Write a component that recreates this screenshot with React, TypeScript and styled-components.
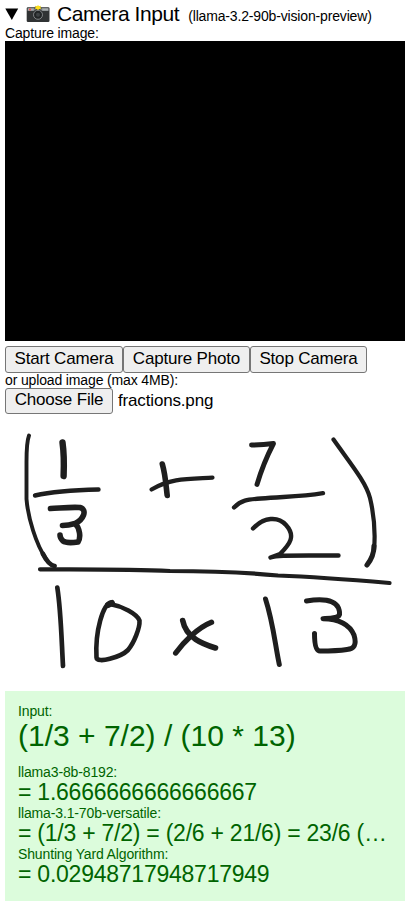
import React from 'react';
import styled, { createGlobalStyle } from 'styled-components';

const GlobalStyle = createGlobalStyle`
  * { box-sizing: border-box; }
  body {
    margin: 0;
    background: #fff;
    color: #000;
    font-family: "Liberation Sans", Arial, sans-serif;
  }
`;

const Page = styled.main`
  width: 400px;
  margin-left: 5px;
`;

const Summary = styled.header`
  display: flex;
  align-items: baseline;
  height: 26px;
  padding-top: 2px;
  white-space: nowrap;
`;

const Arrow = styled.svg`
  flex: none;
  align-self: flex-start;
  width: 14px;
  height: 12px;
  margin: 6px 7px 0 0;
`;

const CameraIcon = styled.svg`
  flex: none;
  align-self: flex-start;
  width: 24px;
  height: 18px;
  margin: 3px 7px 0 0;
`;

const Title = styled.h1`
  margin: 0;
  font-size: 21px;
  line-height: 24px;
  font-weight: 400;
  letter-spacing: -0.42px;
`;

const Model = styled.span`
  margin-left: 9px;
  font-size: 14px;
  letter-spacing: -0.16px;
`;

const Label = styled.div`
  font-size: 14px;
  line-height: 15px;
  height: 15px;
  letter-spacing: -0.14px;
  white-space: nowrap;
`;

const Video = styled.div`
  height: 300px;
  background: #000;
`;

const Row = styled.div<{ $top?: number }>`
  display: flex;
  align-items: center;
  margin-top: ${(p) => p.$top ?? 0}px;
`;

const Button = styled.button<{ $width: number; $height: number }>`
  width: ${(p) => p.$width}px;
  height: ${(p) => p.$height}px;
  padding: 0 0 2px;
  border: 1px solid #767676;
  border-radius: 3px;
  background: #efefef;
  color: #000;
  font: 17px "Liberation Sans", Arial, sans-serif;
  letter-spacing: -0.18px;
  white-space: nowrap;
`;

const FileName = styled.span`
  margin-left: 5px;
  padding-bottom: 1px;
  font-size: 17px;
  line-height: 20px;
  letter-spacing: -0.16px;
`;

const Sketch = styled.svg`
  display: block;
  width: 400px;
  height: 277px;
`;

const Results = styled.section`
  height: 210px;
  padding: 13px 13px 0;
  background: #dcfcdc;
  color: #006400;
`;

const Expression = styled.div`
  height: 46px;
  font-size: 30px;
  line-height: 33px;
  white-space: nowrap;
`;

const Answer = styled.div`
  height: 26px;
  font-size: 23px;
  line-height: 24px;
  letter-spacing: -0.24px;
  overflow: hidden;
  white-space: nowrap;
  text-overflow: ellipsis;
`;

const answers = [
  { model: 'llama3-8b-8192:', value: '= 1.6666666666666667' },
  { model: 'llama-3.1-70b-versatile:', value: '= (1/3 + 7/2) = (2/6 + 21/6) = 23/6 (…' },
  { model: 'Shunting Yard Algorithm:', value: '= 0.02948717948717949' },
];

const strokes: { d: string; w: number }[] = [
  // opening parenthesis
  { d: 'M29 435.5C26.5 442 26.5 450 26.5 462V499C28 518 36 544 46 559', w: 3.9 },
  { d: 'M43 554C46 560 49 565 54.5 566', w: 4.8 },
  // one third
  { d: 'M62.5 442.5C64.3 455 64 466 63.6 476', w: 6.4 },
  { d: 'M35 495.5C55 491 78 490 98.5 489.5', w: 4.4 },
  { d: 'M50.5 508.5C61 508 72 506.8 80 507.5C88 510 83 520 75 523.5C70 525 66 525.5 62.5 525.5M75 523.5C80 528 81 538 78 542C71 543 65 542.5 63 541C61 539 60 537 60 535', w: 5.6 },
  // plus
  { d: 'M162.3 464C165.5 475 166 486 167.2 495.5', w: 5.6 },
  { d: 'M151.5 489.5C171 478 188 479 212.5 477.7', w: 4.2 },
  // seven halves
  { d: 'M251.5 445C260 445 266 444.5 273.5 443.5C267 456 261 471 257 484.5', w: 4.9 },
  { d: 'M234 507.5C241 500 247 499.5 261 498.5C283 496.5 300 497 323 493.2', w: 4.3 },
  { d: 'M253 528.5C264 517 278 516 286 525C296 536 290 544 280 554L270.5 557.5C277 555 287 555.5 338.5 555.5', w: 4.4 },
  // closing parenthesis
  { d: 'M333.5 439.5C350 463 366 482 370 498C375 519 375 539 374 550', w: 4.2 },
  { d: 'M374 546C374 553 371 560 367 565', w: 5.1 },
  // main fraction bar
  { d: 'M40 569.3C85 569.5 129 569 170 571C222 571 252 573 278 575.5C320 577 355 580 389.5 583', w: 4.2 },
  // ten
  { d: 'M57.3 587.5C61 611 61.5 640 63 666', w: 4.7 },
  { d: 'M111 602.5C103 604 95 631 96.5 657.5C97 664 121 657 128 650C134 643 140 628 139.5 620.5C137 614 122 606 110 604', w: 4.6 },
  { d: 'M108 605L112 603', w: 6 },
  // multiplication sign
  { d: 'M182.7 620.5C186 638 203 644 215.5 648', w: 5.6 },
  { d: 'M175.7 653C183 643 197 628 211.5 622.3', w: 5.4 },
  // thirteen
  { d: 'M265.5 599C273 622 275 644 279.3 664.5', w: 5 },
  { d: 'M306.5 601C319 599 334 598.5 338.5 608C341 615 339 617 335 617.5C331 618.5 327 618.5 323 618.7C336 619 349 623 354 635C357 645 354 649 347 649.5C337 651 328 651 320 651C314.5 651 314.5 638 314.5 633.5', w: 5 },
];

export default function App() {
  return (
    <>
      <GlobalStyle />
      <Page>
        <Summary>
          <Arrow viewBox="0 0 14 12">
            <path d="M.3 .5H13.2L6.8 12Z" fill="#000" />
          </Arrow>
          <CameraIcon viewBox="0 0 24 18">
            <rect x=".7" y="2.3" width="22.8" height="14.7" rx="1.3" fill="#303334" />
            <rect x="1.7" y="3.2" width="20.8" height="2.6" fill="#aaaeb0" />
            <path d="M7.5 4.5L9 1.5H14.5L16.5 4.5Z" fill="#555b5e" />
            <circle cx="12" cy="9.8" r="5.8" fill="#303334" />
            <circle cx="12" cy="9.8" r="4.5" fill="#222526" stroke="#888b8d" strokeWidth=".9" />
            <circle cx="12" cy="9.8" r="2" fill="#3f4345" />
            <circle cx="4" cy="4.5" r="1.1" fill="#f44b45" />
            <path d="M12 0L13.1 1.2L14.7 .8L14.4 2.3L15.3 3.5L13.5 3.9L12 5L10.6 3.9L8.8 3.5L9.7 2.3L9.3 .8L11 1.2Z" fill="#ffe01b" />
          </CameraIcon>
          <Title>Camera Input</Title>
          <Model>(llama-3.2-90b-vision-preview)</Model>
        </Summary>
        <Label>Capture image:</Label>
        <Video />
        <Row $top={5}>
          <Button $width={118} $height={27}>Start Camera</Button>
          <Button $width={127} $height={27}>Capture Photo</Button>
          <Button $width={117} $height={27}>Stop Camera</Button>
        </Row>
        <Label>or upload image (max 4MB):</Label>
        <Row>
          <Button $width={108} $height={26}>Choose File</Button>
          <FileName>fractions.png</FileName>
        </Row>
        <Sketch viewBox="5 414 400 277" fill="none" stroke="#1e1e1e" strokeLinecap="round" strokeLinejoin="round">
          {strokes.map((s) => (
            <path key={s.d} d={s.d} strokeWidth={s.w} />
          ))}
        </Sketch>
        <Results>
          <Label>Input:</Label>
          <Expression>(1/3 + 7/2) / (10 * 13)</Expression>
          {answers.map((a) => (
            <React.Fragment key={a.model}>
              <Label>{a.model}</Label>
              <Answer>{a.value}</Answer>
            </React.Fragment>
          ))}
        </Results>
      </Page>
    </>
  );
}
